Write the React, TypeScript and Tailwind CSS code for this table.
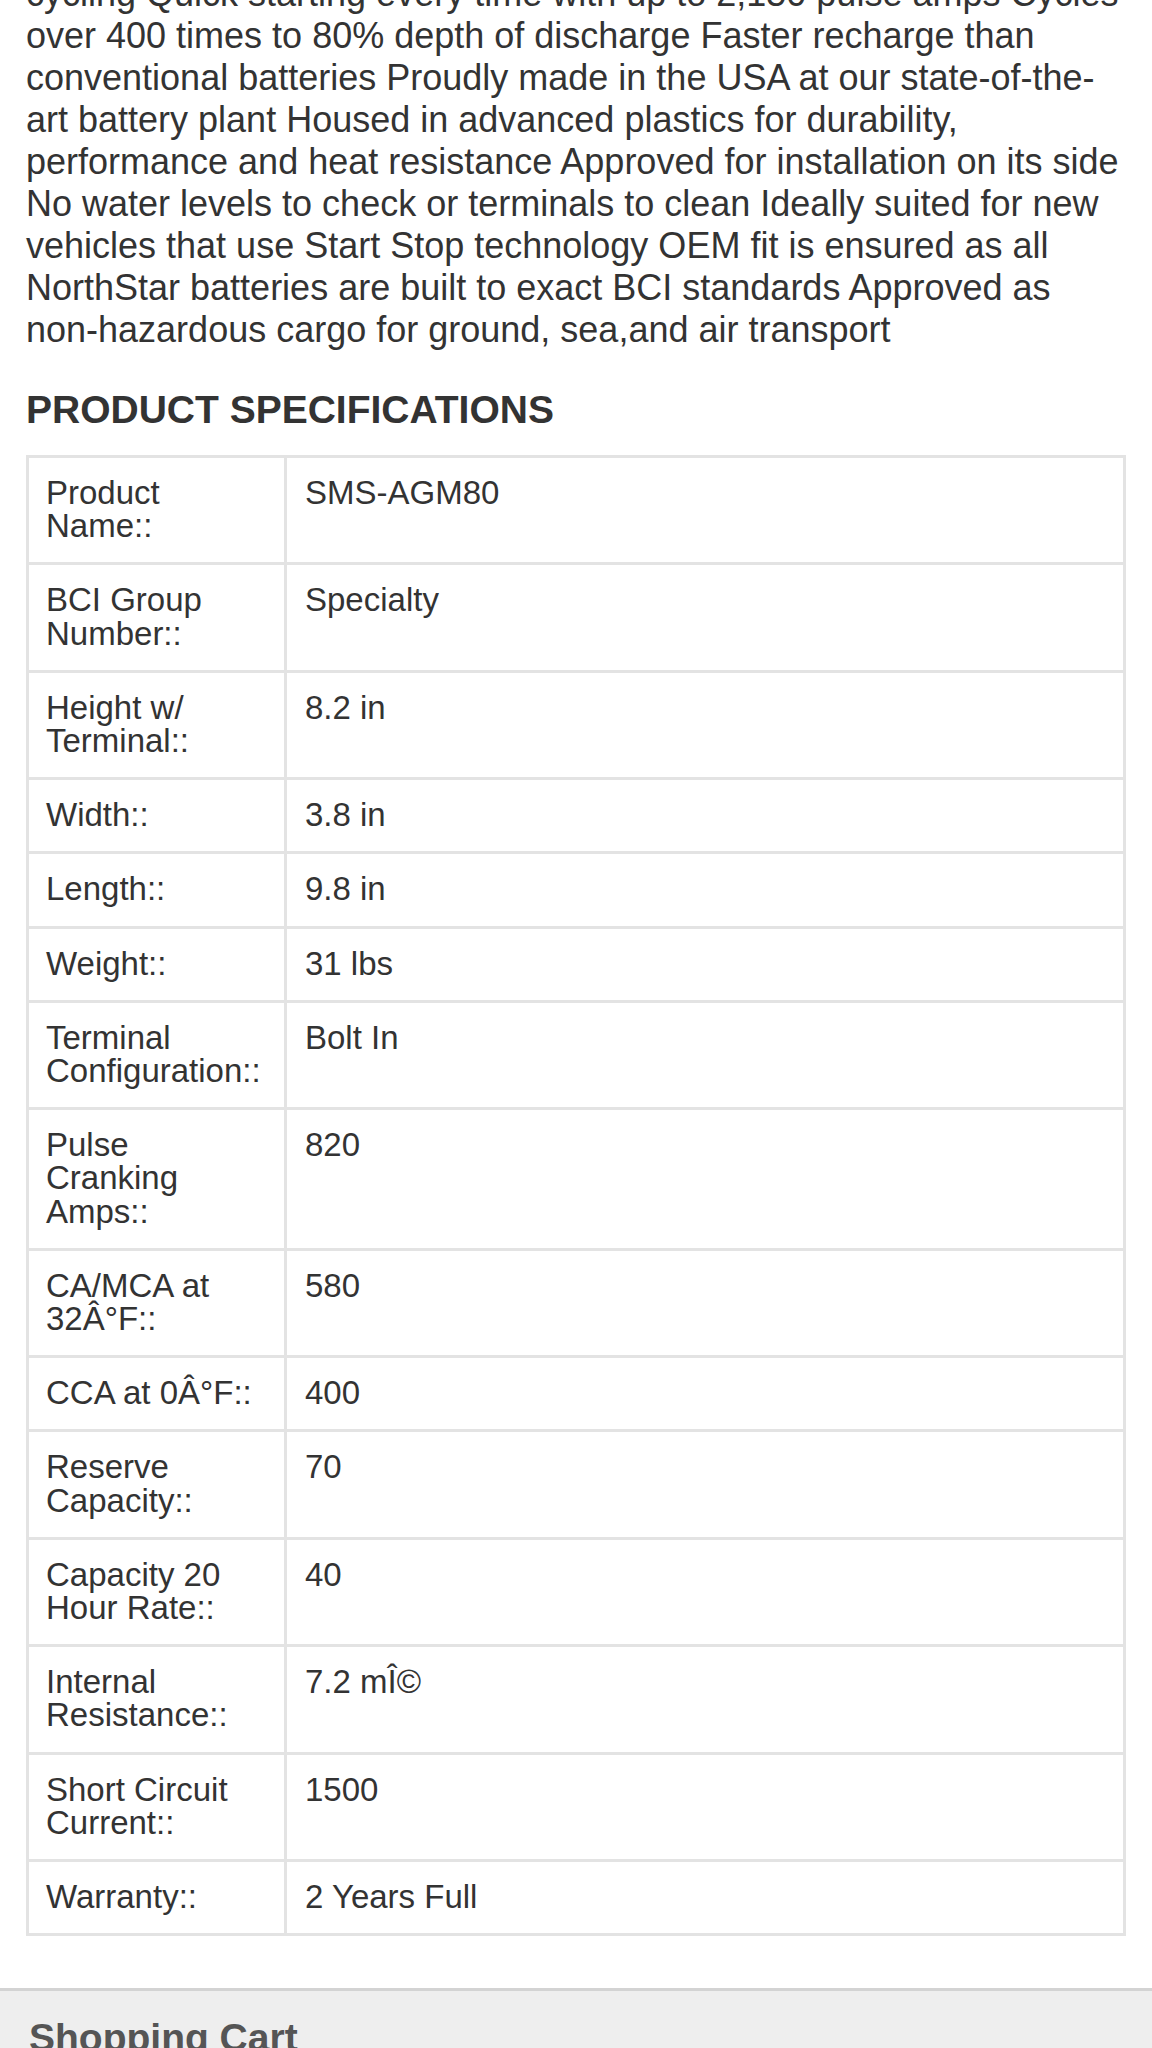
const specs: { label: string; value: string }[] = [
  { label: "Product Name::", value: "SMS-AGM80" },
  { label: "BCI Group Number::", value: "Specialty" },
  { label: "Height w/ Terminal::", value: "8.2 in" },
  { label: "Width::", value: "3.8 in" },
  { label: "Length::", value: "9.8 in" },
  { label: "Weight::", value: "31 lbs" },
  { label: "Terminal Configuration::", value: "Bolt In" },
  { label: "Pulse Cranking Amps::", value: "820" },
  { label: "CA/MCA at 32Â°F::", value: "580" },
  { label: "CCA at 0Â°F::", value: "400" },
  { label: "Reserve Capacity::", value: "70" },
  { label: "Capacity 20 Hour Rate::", value: "40" },
  { label: "Internal Resistance::", value: "7.2 mÎ©" },
  { label: "Short Circuit Current::", value: "1500" },
  { label: "Warranty::", value: "2 Years Full" },
];

const description =
  "cycling Quick starting every time with up to 2,150 pulse amps Cycles over 400 times to 80% depth of discharge Faster recharge than conventional batteries Proudly made in the USA at our state-of-the-art battery plant Housed in advanced plastics for durability, performance and heat resistance Approved for installation on its side No water levels to check or terminals to clean Ideally suited for new vehicles that use Start Stop technology OEM fit is ensured as all NorthStar batteries are built to exact BCI standards Approved as non-hazardous cargo for ground, sea,and air transport";

function SpecRow({ label, value }: { label: string; value: string }) {
  return (
    <tr>
      <td className="w-[258px] border-[3px] border-[#e3e3e3] pt-[18px] pb-[20px] pl-[17px] pr-[16px] align-top">
        {label}
      </td>
      <td className="border-[3px] border-[#e3e3e3] pt-[18px] pb-[20px] pl-[18px] pr-4 align-top">
        {value}
      </td>
    </tr>
  );
}

export default function App() {
  return (
    <div className="min-h-[2048px] overflow-hidden bg-white font-['Liberation_Sans',Arial,sans-serif] text-[#333]">
      <div className="px-[26px]">
        <p className="-mt-[27px] text-[36px] leading-[42px]">{description}</p>
        <h2 className="mt-[37px] text-[39px] font-bold leading-[44px]">
          PRODUCT SPECIFICATIONS
        </h2>
        <table className="mt-[23px] w-full border-collapse text-[33px] leading-[33.2px]">
          <tbody>
            {specs.map((spec) => (
              <SpecRow key={spec.label} label={spec.label} value={spec.value} />
            ))}
          </tbody>
        </table>
      </div>
      <div className="mt-[52px] border-t-[3px] border-[#d3d3d3] bg-[#eeeeee] px-[29px] pt-[25px] pb-16">
        <h2 className="text-[39px] font-bold leading-[44px] text-[#555]">
          Shopping Cart
        </h2>
      </div>
    </div>
  );
}
